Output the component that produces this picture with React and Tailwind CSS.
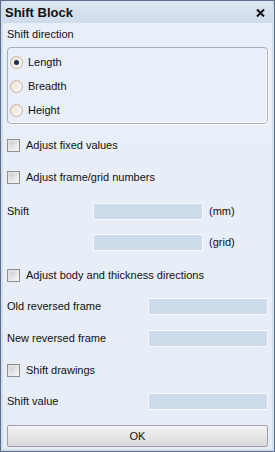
import React from "react";

const font = { fontFamily: '"Liberation Sans", Arial, sans-serif' };

function Checkbox({ label, className = "" }) {
  return (
    <div className={"flex h-[20px] items-center " + className}>
      <div className="h-[13px] w-[13px] border border-[#8e8f8f] bg-gradient-to-br from-[#dcdcdc] to-[#f4f4f4] p-[2px]">
        <div className="h-full w-full bg-gradient-to-br from-[#cbcfd5] to-[#f3f3f3]" />
      </div>
      <span className="ml-[6px] text-[11px] text-[#111]">{label}</span>
    </div>
  );
}

function Radio({ label, checked }) {
  return (
    <div className="flex h-[24px] items-center">
      <div className="flex h-[13px] w-[13px] items-center justify-center rounded-full border border-[#c8b49e] bg-gradient-to-br from-[#ecdfd1] to-[#fbfaf8]">
        {checked && <div className="h-[5px] w-[5px] rounded-full bg-[#1d2f4f]" />}
      </div>
      <span className="ml-[5px] text-[11px] text-[#111]">{label}</span>
    </div>
  );
}

function Input({ className = "" }) {
  return <div className={"h-[17px] border border-[#f7f9fc] bg-[#cddbea] " + className} />;
}

export default function App() {
  return (
    <div style={font} className="h-[452px] w-[275px] border border-[#5b6e8b] bg-[#d2deec]">
      <div className="flex h-full flex-col px-[2px] pb-[2px]">
        <div className="flex h-[22px] shrink-0 items-center justify-between bg-gradient-to-b from-[#dde7f2] to-[#cfdbe9] pl-[2px] pr-[7px] pt-[1px]">
          <span className="text-[13px] font-bold text-[#111]">Shift Block</span>
          <svg width="9" height="8" viewBox="0 0 9 8">
            <path d="M1 0.5 L8 7.5 M8 0.5 L1 7.5" stroke="#111" strokeWidth="2" />
          </svg>
        </div>
        <div className="flex-1 bg-gradient-to-b from-[#e8eff8] to-[#e6edf6] px-[4px]">
          <div className="flex h-[20px] items-center pt-[2px]">
            <span className="text-[11px] text-[#111]">Shift direction</span>
          </div>
          <div className="mt-[4px] h-[77px] rounded-[4px] border border-[#a7aeb8] pl-[2px] pt-[2px] shadow-[inset_-1px_-1px_0_#ffffff,1px_1px_0_#ffffff]">
            <Radio label="Length" checked />
            <Radio label="Breadth" />
            <Radio label="Height" />
          </div>
          <Checkbox label="Adjust fixed values" className="mt-[11px]" />
          <Checkbox label="Adjust frame/grid numbers" className="mt-[12px]" />
          <div className="mt-[14px] flex h-[20px] items-center">
            <span className="w-[86px] text-[11px] text-[#111]">Shift</span>
            <Input className="w-[110px]" />
            <span className="ml-[6px] text-[11px] text-[#111]">(mm)</span>
          </div>
          <div className="mt-[11px] flex h-[20px] items-center">
            <span className="w-[86px]" />
            <Input className="w-[110px]" />
            <span className="ml-[6px] text-[11px] text-[#111]">(grid)</span>
          </div>
          <Checkbox label="Adjust body and thickness directions" className="mt-[13px]" />
          <div className="mt-[11px] flex h-[20px] items-center">
            <span className="w-[141px] text-[11px] text-[#111]">Old reversed frame</span>
            <Input className="flex-1" />
          </div>
          <div className="mt-[12px] flex h-[20px] items-center">
            <span className="w-[141px] text-[11px] text-[#111]">New reversed frame</span>
            <Input className="flex-1" />
          </div>
          <Checkbox label="Shift drawings" className="mt-[12px]" />
          <div className="mt-[11px] flex h-[20px] items-center">
            <span className="w-[141px] text-[11px] text-[#111]">Shift value</span>
            <Input className="flex-1" />
          </div>
          <button className="mt-[14px] flex h-[22px] w-full items-center justify-center rounded-[2px] border border-[#9ea3aa] bg-gradient-to-b from-[#f3f3f3] to-[#d9d9d9] text-[11px] text-[#111]">
            OK
          </button>
        </div>
      </div>
    </div>
  );
}
